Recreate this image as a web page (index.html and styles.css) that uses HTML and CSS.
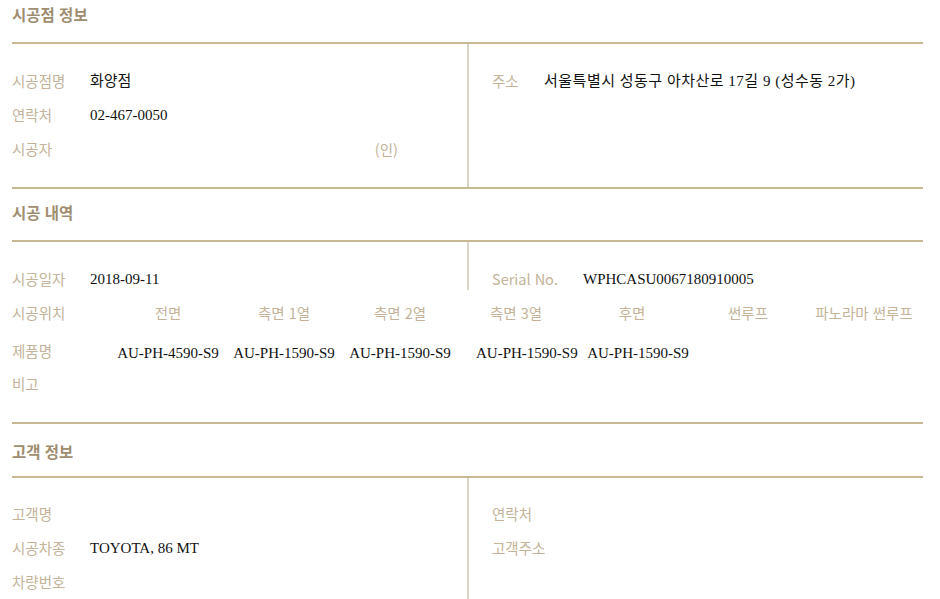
FILE: index.html
```html
<!DOCTYPE html>
<html lang="ko">
<head>
<meta charset="utf-8">
<title>시공 정보</title>
<link rel="stylesheet" href="styles.css">
</head>
<body>
<div class="page">
  <section class="sec">
    <h2 class="head head1">시공점 정보</h2>
    <div class="body body1 split">
      <div class="col">
        <div class="row"><span class="lab">시공점명</span><span class="val">화양점</span></div>
        <div class="row"><span class="lab">연락처</span><span class="val">02-467-0050</span></div>
        <div class="row"><span class="lab">시공자</span><span class="val"></span><span class="sign">(인)</span></div>
      </div>
      <div class="col right">
        <div class="row"><span class="lab lab-short">주소</span><span class="val addr">서울특별시 성동구 아차산로 17길 9 (성수동 2가)</span></div>
      </div>
    </div>
  </section>

  <section class="sec">
    <h2 class="head head2">시공 내역</h2>
    <div class="body body2">
      <div class="split first">
        <div class="col"><div class="row r1"><span class="lab">시공일자</span><span class="val">2018-09-11</span></div></div>
        <div class="col right"><div class="row r1"><span class="lab lab-serial">Serial No.</span><span class="val">WPHCASU0067180910005</span></div></div>
      </div>
      <div class="row grid-row pos">
        <span class="lab lab-wide">시공위치</span>
        <div class="cols">
          <span class="lab c">전면</span>
          <span class="lab c">측면 1열</span>
          <span class="lab c">측면 2열</span>
          <span class="lab c">측면 3열</span>
          <span class="lab c">후면</span>
          <span class="lab c">썬루프</span>
          <span class="lab c">파노라마 썬루프</span>
        </div>
      </div>
      <div class="row grid-row prod">
        <span class="lab lab-wide">제품명</span>
        <div class="cols">
          <span class="val c">AU-PH-4590-S9</span>
          <span class="val c">AU-PH-1590-S9</span>
          <span class="val c">AU-PH-1590-S9</span>
          <span class="val c shift4">AU-PH-1590-S9</span>
          <span class="val c shift5">AU-PH-1590-S9</span>
        </div>
      </div>
      <div class="row note"><span class="lab">비고</span><span class="val"></span></div>
    </div>
  </section>

  <section class="sec">
    <h2 class="head head3">고객 정보</h2>
    <div class="body body3 split">
      <div class="col">
        <div class="row"><span class="lab">고객명</span><span class="val"></span></div>
        <div class="row"><span class="lab">시공차종</span><span class="val">TOYOTA, 86 MT</span></div>
        <div class="row"><span class="lab">차량번호</span><span class="val"></span></div>
      </div>
      <div class="col right">
        <div class="row"><span class="lab">연락처</span><span class="val"></span></div>
        <div class="row"><span class="lab">고객주소</span><span class="val"></span></div>
      </div>
    </div>
  </section>
</div>
</body>
</html>
```

FILE: styles.css
```css
html, body {
  margin: 0;
  padding: 0;
  background: #ffffff;
}
body {
  font-family: "Noto Sans CJK KR", "Noto Sans", sans-serif;
  overflow: hidden;
  height: 599px;
}
.page {
  width: 911px;
  margin-left: 12px;
}
.head {
  margin: 0;
  font-size: 15.5px;
  font-weight: 700;
  color: #a08d6f;
  line-height: 20px;
  border-bottom: 2px solid #c9b993;
}
.head1 { padding: 4px 0 18px; }
.head2 { padding: 13px 0 18px; }
.head3 { padding: 17px 0 15px; }

.body {
  border-bottom: 2px solid #c9b993;
}
.body3 { border-bottom: none; }

.split {
  display: grid;
  grid-template-columns: 455px 1fr;
}
.split .right {
  border-left: 2px solid #dcd5c7;
  padding-left: 23px;
}
.body1 .col { padding-top: 20px; padding-bottom: 21px; }
.body3 .col { padding-top: 19px; padding-bottom: 0; }

.row {
  display: flex;
  align-items: center;
  height: 34px;
}
.lab {
  font-size: 14.5px;
  color: #c4b399;
  line-height: 20px;
  white-space: nowrap;
}
.row > .lab:first-child { width: 78px; flex: none; }
.row > .lab-short:first-child { width: 52px; }
.row > .lab-serial:first-child { width: 91px; }
.row > .lab-wide:first-child { width: 98px; }
.val {
  font-family: "Liberation Serif", "Noto Sans CJK KR", serif;
  font-size: 15px;
  color: #111111;
  line-height: 20px;
  white-space: nowrap;
}
.addr { letter-spacing: 0.5px; }
.sign {
  margin-left: auto;
  margin-right: 69px;
  font-size: 14.5px;
  color: #c4b399;
}

/* section 2 */
.first .col { padding-top: 27px; height: 48px; box-sizing: border-box; }
.first .row.r1 { height: 20px; }
.cols {
  display: grid;
  grid-template-columns: repeat(7, 116px);
}
.cols .c { text-align: center; }
.pos { height: 46px; }
.prod { height: 34px; }
.prod .lab { position: relative; top: -2px; }
.note { height: 28px; margin-bottom: 24px; }
.shift4 { padding-left: 18px; }
.shift5 { padding-left: 12px; }
```
